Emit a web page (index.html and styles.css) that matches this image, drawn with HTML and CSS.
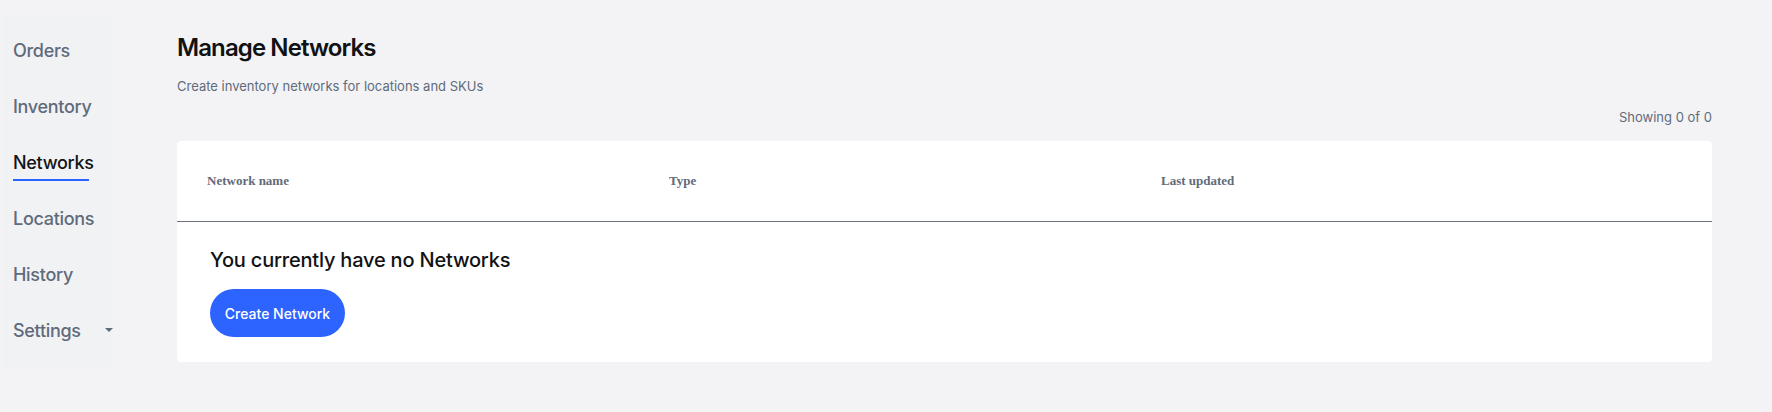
FILE: index.html
```html
<!DOCTYPE html>
<html>
<head>
<meta charset="utf-8">
<link rel="stylesheet" href="styles.css">
</head>
<body>
<div class="app">
  <nav class="sidebar">
    <a class="nav-item">Orders</a>
    <a class="nav-item">Inventory</a>
    <a class="nav-item active">Networks</a>
    <a class="nav-item">Locations</a>
    <a class="nav-item">History</a>
    <a class="nav-item has-caret">Settings<span class="caret"></span></a>
  </nav>
  <main class="main">
    <h1 class="title">Manage Networks</h1>
    <p class="subtitle">Create inventory networks for locations and SKUs</p>
    <div class="count">Showing 0 of 0</div>
    <section class="card">
      <div class="table-head">
        <div class="th">Network name</div>
        <div class="th">Type</div>
        <div class="th">Last updated</div>
      </div>
      <div class="empty">
        <h2 class="empty-title">You currently have no Networks</h2>
        <button class="btn">Create Network</button>
      </div>
    </section>
  </main>
</div>
</body>
</html>
```

FILE: styles.css
```css
* { box-sizing: border-box; }
html, body { margin: 0; padding: 0; }
body {
  background: #f3f3f5;
  font-family: Inter, "Noto Sans", sans-serif;
  color: #111214;
  width: 1772px;
  height: 412px;
  overflow: hidden;
}
.app {
  display: flex;
  align-items: flex-start;
}
.sidebar {
  margin: 14px 0 0 3px;
  width: 110px;
  background: #f1f2f4;
  display: flex;
  flex-direction: column;
  padding: 8px 0 11px 10px;
}
.nav-item {
  display: flex;
  align-items: center;
  flex-shrink: 0;
  height: 56px;
  font-size: 18px;
  font-weight: 500;
  color: #5f6b7b;
  position: relative;
  letter-spacing: -0.3px;
}
.nav-item.active {
  color: #131416;
}
.nav-item.active::after {
  content: "";
  position: absolute;
  left: 0;
  width: 76px;
  top: 45px;
  height: 2px;
  background: #2b63ff;
}
.caret {
  margin-left: 24px;
  width: 0;
  height: 0;
  border-left: 4px solid transparent;
  border-right: 4px solid transparent;
  border-top: 4px solid #5f6b7b;
}
.main {
  flex: 1;
  margin: 0 60px 0 64px;
  display: flex;
  flex-direction: column;
}
.title {
  margin: 33px 0 0 0;
  font-size: 24px;
  line-height: 30px;
  font-weight: 600;
  letter-spacing: -0.9px;
}
.subtitle {
  margin: 14px 0 0 0;
  font-size: 13px;
  line-height: 18px;
  color: #5f6b7b;
}
.count {
  align-self: flex-end;
  margin-top: 13px;
  font-size: 13px;
  line-height: 18px;
  color: #5f6b7b;
}
.card {
  margin-top: 15px;
  background: #ffffff;
  border-radius: 4px;
  height: 221px;
}
.table-head {
  display: grid;
  grid-template-columns: 462px 492px 1fr;
  height: 81px;
  align-items: center;
  border-bottom: 1px solid #6b7280;
}
.th {
  padding-left: 30px;
  font-family: "Liberation Serif", serif;
  font-weight: bold;
  font-size: 13px;
  color: #5f6b7b;
}
.empty {
  padding: 25px 33px 0 33px;
}
.empty-title {
  margin: 0;
  font-size: 20px;
  line-height: 26px;
  font-weight: 500;
  letter-spacing: -0.2px;
}
.btn {
  margin-top: 16px;
  height: 48px;
  width: 135px;
  border: none;
  border-radius: 24px;
  background: #2d63ff;
  color: #ffffff;
  font-family: Inter, "Noto Sans", sans-serif;
  font-size: 14px;
  font-weight: 500;
  padding: 0;
}
```
